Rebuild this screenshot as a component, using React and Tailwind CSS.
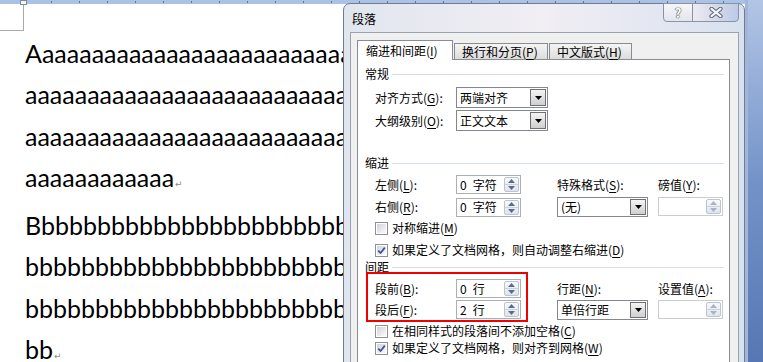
import React from 'react'

// accelerator key, e.g. (G) with underlined letter
const Acc = ({ k }) => (
  <>
    (<span className="underline underline-offset-[2px]">{k}</span>)
  </>
)

function Arrow({ up, color }) {
  return (
    <svg width="7" height="4" viewBox="0 0 7 4" className="block">
      <path d={up ? 'M0 4L3.5 0L7 4Z' : 'M0 0H7L3.5 4Z'} fill={color} />
    </svg>
  )
}

function Spin({ value, unit, disabled }) {
  const c = disabled ? '#aab3c2' : '#5a6c8e'
  return (
    <div className={`flex h-[19px] w-[65px] border bg-white ${disabled ? 'border-[#c9ccd1]' : 'border-[#a9b0ba]'}`}>
      <div className="flex flex-1 items-center pl-[3px] leading-none whitespace-nowrap">
        {value}
        {unit && <span className="ml-[6px]">{unit}</span>}
      </div>
      <div className="my-px mr-px flex w-[15px] flex-col rounded-[2px] border border-[#bcc4cf] bg-gradient-to-b from-[#f7f9fb] to-[#dfe5ed]">
        <div className="flex flex-1 items-center justify-center border-b border-[#cdd3dc]"><Arrow up color={c} /></div>
        <div className="flex flex-1 items-center justify-center"><Arrow color={c} /></div>
      </div>
    </div>
  )
}

function Combo({ text, w = 'w-[92px]', h = 'h-[21px]' }) {
  return (
    <div className={`flex ${w} ${h} items-center border border-[#828790] bg-white`}>
      <div className="flex-1 pl-[3px] leading-none whitespace-nowrap">{text}</div>
      <div className="mr-px flex h-[calc(100%-2px)] w-[16px] items-center justify-center border border-[#707070] bg-gradient-to-b from-[#f4f4f4] to-[#cfcfcf]">
        <Arrow color="#000" />
      </div>
    </div>
  )
}

function Check({ on, className = '', children }) {
  return (
    <div className={`flex h-[14px] items-center pl-[17px] ${className}`}>
      <div className="h-[13px] w-[13px] border border-[#8e8f8f] bg-white p-px">
        <div className="flex h-full w-full items-center justify-center bg-gradient-to-br from-[#cfd3d8] to-[#fbfbfb]">
          {on && (
            <svg width="9" height="9" viewBox="0 0 9 9">
              <path d="M1.2 4.6L3.6 7L7.8 1.6" fill="none" stroke="#3f5597" strokeWidth="1.8" />
            </svg>
          )}
        </div>
      </div>
      <span className="ml-[4px] leading-none whitespace-nowrap">{children}</span>
    </div>
  )
}

function Group({ title, className = '' }) {
  return (
    <div className={`flex items-center pl-[7px] pr-[5px] ${className}`}>
      <span className="leading-none">{title}</span>
      <div className="ml-[3px] h-px flex-1 bg-[#d5dfe5]" />
    </div>
  )
}

function Field({ label, children, className = '' }) {
  return (
    <div className={`flex items-center ${className}`}>
      <span className="w-[81px] leading-none whitespace-nowrap">{label}</span>
      {children}
    </div>
  )
}

function Dialog() {
  return (
    <div className="absolute left-[343px] top-[3px] h-[400px] w-[402px] rounded-t-[7px] border border-[#6f7c90] bg-gradient-to-r from-[#e1e6ee] via-[#f1eef4] to-[#d8e1ef] font-['Noto_Sans_CJK_SC',sans-serif] text-[12px] text-black">
      {/* title bar */}
      <div className="flex h-[28px] items-center pl-[8px] pt-px leading-none">段落</div>
      <div className="absolute right-[5px] top-[-1px] flex h-[19px]">
        <div className="flex w-[30px] items-center justify-center rounded-bl-[4px] border border-[#8893a6] bg-gradient-to-b from-[#f7f5f8] to-[#e3e6ee] text-[13px] font-bold leading-none text-white [text-shadow:0_0_1px_#4a4f59,0_0_1px_#4a4f59,0_0_1px_#4a4f59]">
          ?
        </div>
        <div className="-ml-px flex w-[47px] items-center justify-center rounded-br-[4px] border border-[#8893a6] bg-gradient-to-r from-[#eee9f1] to-[#bccbe6]">
          <svg width="14" height="11" viewBox="0 0 14 11">
            <path d="M2.5 1.8L11.5 9.2M11.5 1.8L2.5 9.2" stroke="#5e6675" strokeWidth="4.2" strokeLinecap="round" />
            <path d="M2.5 1.8L11.5 9.2M11.5 1.8L2.5 9.2" stroke="#f4f5f8" strokeWidth="2.2" strokeLinecap="round" />
          </svg>
        </div>
      </div>

      {/* client area */}
      <div className="ml-[6px] h-[340px] w-[389px] border border-[#99a3b0] bg-[#f0f0f0] pt-[7px]">
        <div className="flex items-end pl-[6px]">
          <div className="relative z-10 flex h-[20px] w-[96px] items-center border border-b-0 border-[#898c95] bg-white pl-[8px] pt-px leading-none whitespace-nowrap">
            缩进和间距<Acc k="I" />
          </div>
          <div className="ml-[1px] flex h-[17px] w-[94px] items-center border border-[#898c95] bg-gradient-to-b from-[#f5f5f5] to-[#dcdcdc] pl-[7px] leading-none whitespace-nowrap">
            换行和分页<Acc k="P" />
          </div>
          <div className="ml-[1px] flex h-[17px] w-[83px] items-center border border-[#898c95] bg-gradient-to-b from-[#f5f5f5] to-[#dcdcdc] pl-[7px] leading-none whitespace-nowrap">
            中文版式<Acc k="H" />
          </div>
        </div>

        <div className="-mt-px ml-[6px] h-[320px] w-[373px] border border-[#898c95] bg-white">
          <Group title="常规" className="mt-[6px] h-[16px]" />
          <Field className="mt-[5px] h-[21px] pl-[17px]" label={<>对齐方式<Acc k="G" />:</>}>
            <Combo text="两端对齐" />
          </Field>
          <Field className="mt-[2px] h-[21px] pl-[17px]" label={<>大纲级别<Acc k="O" />:</>}>
            <Combo text="正文文本" />
          </Field>

          <Group title="缩进" className="mt-[24px] h-[16px]" />
          <div className="mt-[4px] flex pl-[17px]">
            <div className="w-[146px]">
              <Field className="h-[19px]" label={<>左侧<Acc k="L" />:</>}><Spin value="0" unit="字符" /></Field>
              <Field className="mt-[3px] h-[20px]" label={<>右侧<Acc k="R" />:</>}><Spin value="0" unit="字符" /></Field>
            </div>
            <div className="ml-[36px] w-[91px]">
              <div className="flex h-[19px] items-center leading-none whitespace-nowrap">特殊格式<Acc k="S" />:</div>
              <div className="mt-[3px]"><Combo text="(无)" w="w-[91px]" h="h-[20px]" /></div>
            </div>
            <div className="ml-[10px] w-[65px]">
              <div className="flex h-[19px] items-center leading-none whitespace-nowrap">磅值<Acc k="Y" />:</div>
              <div className="mt-[3px]"><Spin disabled /></div>
            </div>
          </div>
          <Check className="mt-[4px]">对称缩进<Acc k="M" /></Check>
          <Check on className="mt-[8px]">如果定义了文档网格，则自动调整右缩进<Acc k="D" /></Check>

          <Group title="间距" className="mt-[4px] h-[12px]" />
          <div className="-mt-px flex pl-[8px]">
            <div className="w-[162px] border-2 border-[#f00000] pb-px pl-[7px] pt-[5px]">
              <Field className="h-[19px]" label={<>段前<Acc k="B" />:</>}><Spin value="0" unit="行" /></Field>
              <Field className="mt-[2px] h-[19px]" label={<>段后<Acc k="F" />:</>}><Spin value="2" unit="行" /></Field>
            </div>
            <div className="ml-[29px] w-[91px] pt-[7px]">
              <div className="flex h-[19px] items-center leading-none whitespace-nowrap">行距<Acc k="N" />:</div>
              <div className="mt-[2px]"><Combo text="单倍行距" w="w-[91px]" h="h-[20px]" /></div>
            </div>
            <div className="ml-[10px] w-[65px] pt-[7px]">
              <div className="flex h-[19px] items-center leading-none whitespace-nowrap">设置值<Acc k="A" />:</div>
              <div className="mt-[2px]"><Spin disabled /></div>
            </div>
          </div>
          <Check className="mt-[2px]">在相同样式的段落间不添加空格<Acc k="C" /></Check>
          <Check on className="mt-[3px]">如果定义了文档网格，则对齐到网格<Acc k="W" /></Check>
        </div>
      </div>
    </div>
  )
}

const ticks = Array.from({ length: 26 }, (_, i) => 51 + i * 28)

export default function App() {
  const a = 'a'.repeat(40)
  const b = 'b'.repeat(40)
  const mark = <span className="ml-px font-['DejaVu_Sans',sans-serif] text-[9px] text-[#8c8c8c]">↵</span>

  return (
    <div className="relative flex h-[362px] w-[763px] overflow-hidden bg-white">
      <div className="w-[745px] shrink-0 overflow-hidden bg-white text-black">
        {/* ruler */}
        <svg width="745" height="5" className="block">
          <rect x="0" y="0" width="745" height="4" fill="#a9c2e6" />
          {ticks.map(x => <rect key={x} x={x} y="1" width="1" height="2" fill="#5f769c" />)}
          <rect x="20.5" y="0.5" width="6" height="4" fill="#f6f6f6" stroke="#7d8aa0" />
        </svg>
        <div className="h-[26px] w-[24px] border-b border-r border-[#a9a9a9]" />
        <div className="mt-[2px] whitespace-nowrap pl-[25px] font-['Lato',sans-serif] text-[25px] leading-[41.3px]">
          <div>A{a}</div>
          <div>{a}</div>
          <div>{a}</div>
          <div>{'a'.repeat(12)}{mark}</div>
          <div>B{b}</div>
          <div>{b}</div>
          <div>{b}</div>
          <div>bb{mark}</div>
        </div>
      </div>
      <div className="w-[18px] shrink-0 border-l-[3px] border-[#a3b6da] bg-gradient-to-b from-[#b3c5e6] via-[#7393c8] to-[#5677b3]" />
      <Dialog />
    </div>
  )
}
